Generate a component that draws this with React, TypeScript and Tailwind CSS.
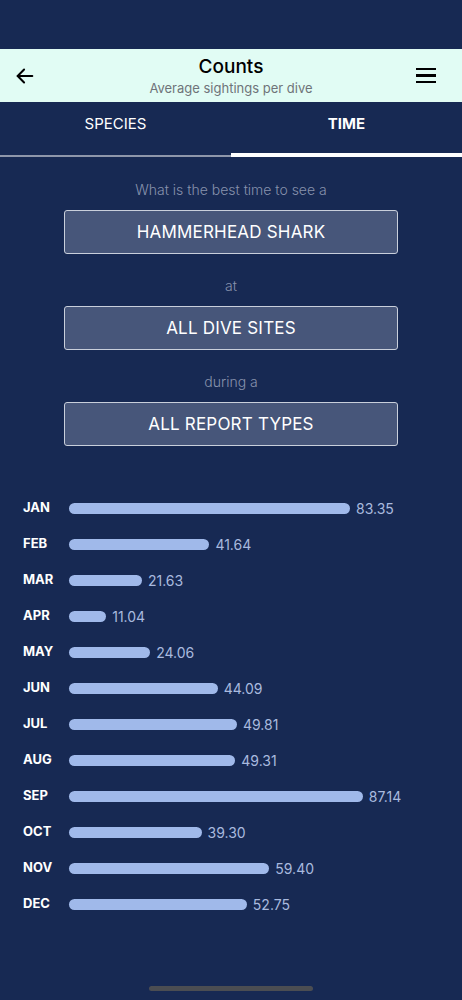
import * as React from 'react';

const months: [string, number][] = [
  ['JAN', 83.35],
  ['FEB', 41.64],
  ['MAR', 21.63],
  ['APR', 11.04],
  ['MAY', 24.06],
  ['JUN', 44.09],
  ['JUL', 49.81],
  ['AUG', 49.31],
  ['SEP', 87.14],
  ['OCT', 39.3],
  ['NOV', 59.4],
  ['DEC', 52.75],
];

function Picker({ label }: { label: string }) {
  return (
    <button className="mx-[64px] h-[44px] rounded-[3px] border-[1.5px] border-[#c9cfdb] bg-[#47567a] pt-[2px] text-[17px] tracking-[0.2px] text-white">
      {label}
    </button>
  );
}

function Prompt({ text }: { text: string }) {
  return <p className="text-center text-[14px] font-light leading-[20px] text-[#8792ad]">{text}</p>;
}

export default function App() {
  const [tab, setTab] = React.useState<'species' | 'time'>('time');

  return (
    <div className="relative flex h-[1000px] w-[462px] flex-col overflow-hidden bg-[#172953] font-['Inter',sans-serif]">
      {/* status bar spacer */}
      <div className="h-[49px]" />

      {/* Header */}
      <div className="flex h-[53px] items-center bg-[#e1fcf4] pl-[14px] pr-[26px]">
        <button className="w-[24px] text-black">
          <svg width="22" height="22" viewBox="0 0 24 24" fill="none" stroke="currentColor" strokeWidth="2.2" strokeLinecap="round" strokeLinejoin="round">
            <path d="M20 12H4" />
            <path d="M11 5l-7 7 7 7" />
          </svg>
        </button>
        <div className="flex flex-1 flex-col items-center pl-[12px] pt-[1px]">
          <h1 className="text-[19px] font-medium leading-[24px] text-black">Counts</h1>
          <p className="text-[13px] leading-[18px] text-[#6f7479]">Average sightings per dive</p>
        </div>
        <button className="flex w-[24px] flex-col items-end gap-[4px]">
          <span className="block h-[2.5px] w-[20px] bg-black" />
          <span className="block h-[2.5px] w-[20px] bg-black" />
          <span className="block h-[2.5px] w-[20px] bg-black" />
        </button>
      </div>

      {/* Tabs */}
      <div className="flex h-[55px]">
        {(['species', 'time'] as const).map((t) => (
          <button
            key={t}
            onClick={() => setTab(t)}
            className={`flex flex-1 flex-col justify-end text-[15px] uppercase text-white ${tab === t ? 'font-bold' : ''}`}
          >
            <span className="flex-1 pt-[11px]">{t}</span>
            <span className={`block w-full ${tab === t ? 'h-[4px] bg-white' : 'h-[2px] bg-[#8e96aa]'}`} />
          </button>
        ))}
      </div>

      {/* Selectors */}
      <div className="flex flex-col pt-[23px]">
        <Prompt text="What is the best time to see a" />
        <div className="h-[10px]" />
        <Picker label="HAMMERHEAD SHARK" />
        <div className="h-[22px]" />
        <Prompt text="at" />
        <div className="h-[10px]" />
        <Picker label="ALL DIVE SITES" />
        <div className="h-[22px]" />
        <Prompt text="during a" />
        <div className="h-[10px]" />
        <Picker label="ALL REPORT TYPES" />
      </div>

      {/* Chart */}
      <div className="mt-[53px] flex flex-col gap-[18px] pl-[23px]">
        {months.map(([m, v]) => (
          <div key={m} className="flex h-[18px] items-center">
            <span className="w-[46px] text-[13px] font-bold text-white">{m}</span>
            <span className="block h-[11px] rounded-full bg-[#a0b9ea]" style={{ width: `${v * 3.372}px` }} />
            <span className="ml-[6px] text-[14px] text-[#a9badf]">{v.toFixed(2)}</span>
          </div>
        ))}
      </div>

      {/* Home indicator */}
      <div className="absolute bottom-[9px] left-[149px] h-[5px] w-[164px] rounded-full bg-[#4b4d52]" />
    </div>
  );
}
